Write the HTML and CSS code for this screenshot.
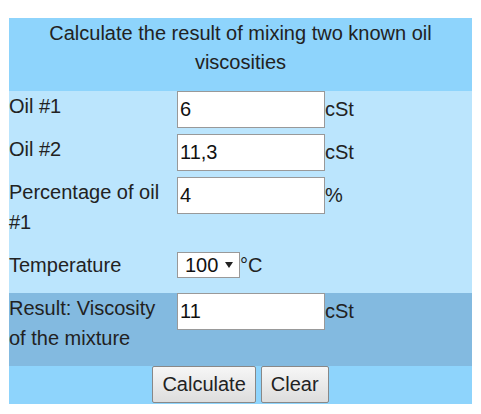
FILE: index.html
```html
<!DOCTYPE html>
<html lang="en">
<head>
  <meta charset="UTF-8">
  <meta name="viewport" content="width=device-width, initial-scale=1.0">
  <title>Oil viscosity mixing</title>
  <link rel="stylesheet" href="styles.css">
</head>
<body>
  <div class="calc">
    <div class="calc-title">Calculate the result of mixing two known oil viscosities</div>
    <div class="calc-row">
      <div class="calc-label">Oil #1</div>
      <div class="calc-field"><input class="calc-input" type="text" value="6">cSt</div>
    </div>
    <div class="calc-row">
      <div class="calc-label">Oil #2</div>
      <div class="calc-field"><input class="calc-input" type="text" value="11,3">cSt</div>
    </div>
    <div class="calc-row">
      <div class="calc-label">Percentage of oil #1</div>
      <div class="calc-field"><input class="calc-input" type="text" value="4">%</div>
    </div>
    <div class="calc-row">
      <div class="calc-label">Temperature</div>
      <div class="calc-field"><span class="select-wrap"><select class="calc-select">
        <option>40</option>
        <option selected>100</option>
      </select></span>°C</div>
    </div>
    <div class="calc-row calc-result">
      <div class="calc-label">Result: Viscosity of the mixture</div>
      <div class="calc-field"><input class="calc-input" type="text" value="11">cSt</div>
    </div>
    <div class="calc-actions">
      <button class="calc-btn" type="button">Calculate</button>
      <button class="calc-btn" type="button">Clear</button>
    </div>
  </div>
</body>
</html>
```

FILE: styles.css
```css
body {
  margin: 0;
  font-family: "Liberation Sans", Arial, sans-serif;
  font-size: 20px;
  color: #222;
}
.calc {
  width: 463px;
  margin: 18px 9px;
  background: #bbe5fd;
}
.calc-title {
  background: #8ed4fc;
  text-align: center;
  line-height: 29px;
  padding: 1px 0 14px;
}
.calc-row {
  display: grid;
  grid-template-columns: 168px 1fr;
}
.calc-label {
  line-height: 30px;
  padding-bottom: 13px;
}
.calc-field {
  line-height: 30px;
}
.calc-result {
  background: #83bae0;
}
.calc-input {
  box-sizing: border-box;
  width: 148px;
  height: 37px;
  padding: 0 2px;
  border: 1px solid #999;
  background: #fff;
  font-family: inherit;
  font-size: 20px;
  color: #111;
}
.select-wrap {
  position: relative;
  display: inline-block;
  line-height: normal;
  vertical-align: 0;
}
.select-wrap::after {
  content: "";
  position: absolute;
  left: 48px;
  top: 10px;
  border-left: 4px solid transparent;
  border-right: 4px solid transparent;
  border-top: 6px solid #222;
  pointer-events: none;
}
.calc-select {
  appearance: none;
  -webkit-appearance: none;
  box-sizing: border-box;
  width: 63px;
  height: 26px;
  padding: 0 0 0 7px;
  border: 1px solid #999;
  border-radius: 0;
  background: #fff;
  font-family: inherit;
  font-size: 20px;
  color: #111;
}
.calc-actions {
  display: flex;
  justify-content: center;
  gap: 5px;
  background: #8ed4fc;
  padding-bottom: 1px;
}
.calc-btn {
  box-sizing: border-box;
  height: 37px;
  padding: 0 9px;
  border: 1px solid #888;
  border-radius: 2px;
  background: linear-gradient(#f6f6f6, #dddddd);
  font-family: inherit;
  font-size: 20px;
  color: #222;
}
```
